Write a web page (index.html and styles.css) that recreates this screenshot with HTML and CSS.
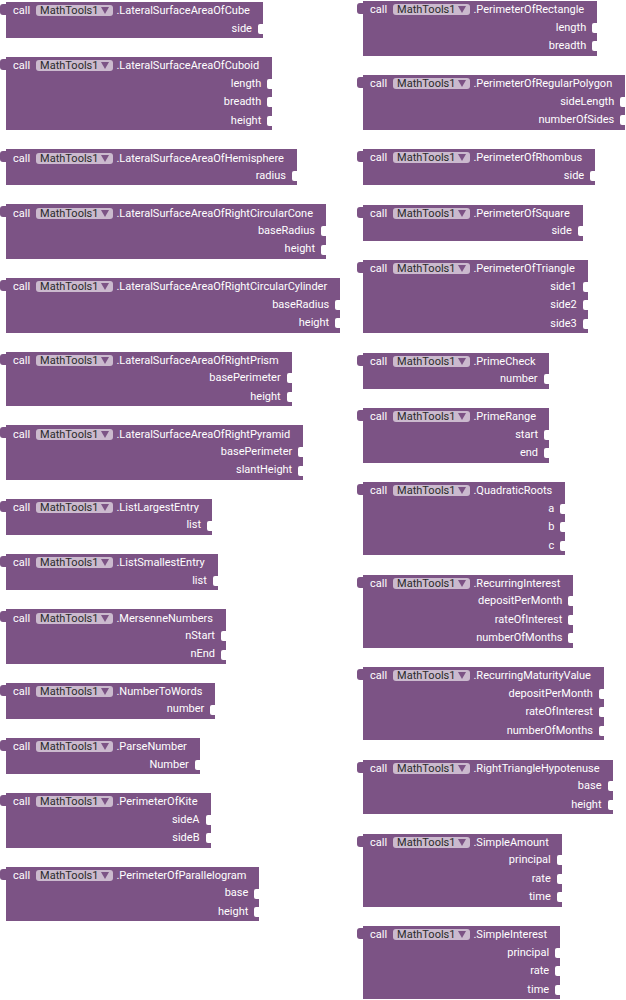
FILE: index.html
```html
<!DOCTYPE html>
<html>
<head>
<meta charset="utf-8">
<link rel="stylesheet" href="styles.css">
</head>
<body>
<div class="ws">
  <div class="col col-left">
    <div class="blk"><div class="hdr"><span>call</span><span class="pill">MathTools1</span><span class="meth">.LateralSurfaceAreaOfCube</span></div><div class="in">side</div></div>
    <div class="blk"><div class="hdr"><span>call</span><span class="pill">MathTools1</span><span class="meth">.LateralSurfaceAreaOfCuboid</span></div><div class="in">length</div><div class="in">breadth</div><div class="in">height</div></div>
    <div class="blk"><div class="hdr"><span>call</span><span class="pill">MathTools1</span><span class="meth">.LateralSurfaceAreaOfHemisphere</span></div><div class="in">radius</div></div>
    <div class="blk"><div class="hdr"><span>call</span><span class="pill">MathTools1</span><span class="meth">.LateralSurfaceAreaOfRightCircularCone</span></div><div class="in">baseRadius</div><div class="in">height</div></div>
    <div class="blk"><div class="hdr"><span>call</span><span class="pill">MathTools1</span><span class="meth">.LateralSurfaceAreaOfRightCircularCylinder</span></div><div class="in">baseRadius</div><div class="in">height</div></div>
    <div class="blk"><div class="hdr"><span>call</span><span class="pill">MathTools1</span><span class="meth">.LateralSurfaceAreaOfRightPrism</span></div><div class="in">basePerimeter</div><div class="in">height</div></div>
    <div class="blk"><div class="hdr"><span>call</span><span class="pill">MathTools1</span><span class="meth">.LateralSurfaceAreaOfRightPyramid</span></div><div class="in">basePerimeter</div><div class="in">slantHeight</div></div>
    <div class="blk"><div class="hdr"><span>call</span><span class="pill">MathTools1</span><span class="meth">.ListLargestEntry</span></div><div class="in">list</div></div>
    <div class="blk"><div class="hdr"><span>call</span><span class="pill">MathTools1</span><span class="meth">.ListSmallestEntry</span></div><div class="in">list</div></div>
    <div class="blk"><div class="hdr"><span>call</span><span class="pill">MathTools1</span><span class="meth">.MersenneNumbers</span></div><div class="in">nStart</div><div class="in">nEnd</div></div>
    <div class="blk"><div class="hdr"><span>call</span><span class="pill">MathTools1</span><span class="meth">.NumberToWords</span></div><div class="in">number</div></div>
    <div class="blk"><div class="hdr"><span>call</span><span class="pill">MathTools1</span><span class="meth">.ParseNumber</span></div><div class="in">Number</div></div>
    <div class="blk"><div class="hdr"><span>call</span><span class="pill">MathTools1</span><span class="meth">.PerimeterOfKite</span></div><div class="in">sideA</div><div class="in">sideB</div></div>
    <div class="blk"><div class="hdr"><span>call</span><span class="pill">MathTools1</span><span class="meth">.PerimeterOfParallelogram</span></div><div class="in">base</div><div class="in">height</div></div>
  </div>
  <div class="col col-right">
    <div class="blk"><div class="hdr"><span>call</span><span class="pill">MathTools1</span><span class="meth">.PerimeterOfRectangle</span></div><div class="in">length</div><div class="in">breadth</div></div>
    <div class="blk"><div class="hdr"><span>call</span><span class="pill">MathTools1</span><span class="meth">.PerimeterOfRegularPolygon</span></div><div class="in">sideLength</div><div class="in">numberOfSides</div></div>
    <div class="blk"><div class="hdr"><span>call</span><span class="pill">MathTools1</span><span class="meth">.PerimeterOfRhombus</span></div><div class="in">side</div></div>
    <div class="blk"><div class="hdr"><span>call</span><span class="pill">MathTools1</span><span class="meth">.PerimeterOfSquare</span></div><div class="in">side</div></div>
    <div class="blk"><div class="hdr"><span>call</span><span class="pill">MathTools1</span><span class="meth">.PerimeterOfTriangle</span></div><div class="in">side1</div><div class="in">side2</div><div class="in">side3</div></div>
    <div class="blk"><div class="hdr"><span>call</span><span class="pill">MathTools1</span><span class="meth">.PrimeCheck</span></div><div class="in">number</div></div>
    <div class="blk"><div class="hdr"><span>call</span><span class="pill">MathTools1</span><span class="meth">.PrimeRange</span></div><div class="in">start</div><div class="in">end</div></div>
    <div class="blk"><div class="hdr"><span>call</span><span class="pill">MathTools1</span><span class="meth">.QuadraticRoots</span></div><div class="in">a</div><div class="in">b</div><div class="in">c</div></div>
    <div class="blk"><div class="hdr"><span>call</span><span class="pill">MathTools1</span><span class="meth">.RecurringInterest</span></div><div class="in">depositPerMonth</div><div class="in">rateOfInterest</div><div class="in">numberOfMonths</div></div>
    <div class="blk"><div class="hdr"><span>call</span><span class="pill">MathTools1</span><span class="meth">.RecurringMaturityValue</span></div><div class="in">depositPerMonth</div><div class="in">rateOfInterest</div><div class="in">numberOfMonths</div></div>
    <div class="blk"><div class="hdr"><span>call</span><span class="pill">MathTools1</span><span class="meth">.RightTriangleHypotenuse</span></div><div class="in">base</div><div class="in">height</div></div>
    <div class="blk"><div class="hdr"><span>call</span><span class="pill">MathTools1</span><span class="meth">.SimpleAmount</span></div><div class="in">principal</div><div class="in">rate</div><div class="in">time</div></div>
    <div class="blk"><div class="hdr"><span>call</span><span class="pill">MathTools1</span><span class="meth">.SimpleInterest</span></div><div class="in">principal</div><div class="in">rate</div><div class="in">time</div></div>
  </div>
</div>
</body>
</html>
```
FILE: styles.css
```css
* { box-sizing: border-box; }
html, body { margin: 0; padding: 0; background: #ffffff; }
body {
  width: 626px;
  height: 1000px;
  overflow: hidden;
  font-family: Roboto, "Noto Sans", sans-serif;
  font-size: 11px;
  color: #ffffff;
}
.ws { display: flex; align-items: flex-start; }
.col { display: flex; flex-direction: column; align-items: flex-start; flex-shrink: 0; }
.col-left { width: 357px; padding: 2px 0 0 6px; gap: 19.15px; }
.col-right { padding: 1px 0 0 6px; gap: 19.5px; }

.blk {
  position: relative;
  background: #7c5385;
  display: flex;
  flex-direction: column;
  align-items: flex-end;
}
.blk::before {
  content: "";
  position: absolute;
  left: -6px;
  top: 2px;
  width: 6px;
  height: 11px;
  background: #7c5385;
  border-radius: 3px 0 0 3px;
}
.hdr {
  align-self: stretch;
  display: flex;
  align-items: center;
  height: 17.5px;
  padding: 0 13px 0 7px;
  white-space: nowrap;
}
.pill {
  display: flex;
  align-items: center;
  height: 11px;
  margin-left: 6px;
  padding: 0 4px 0 4px;
  background: #cbbace;
  color: #2a2a2a;
  border-radius: 3px;
}
.pill::after {
  content: "";
  width: 0;
  height: 0;
  border-left: 4.5px solid transparent;
  border-right: 4.5px solid transparent;
  border-top: 7px solid #7c5385;
  margin-left: 3px;
}
.meth { margin-left: 3px; }
.in {
  position: relative;
  height: 18.5px;
  line-height: 18.5px;
  padding-right: 11px;
  white-space: nowrap;
}
.in::after {
  content: "";
  position: absolute;
  right: 0;
  top: 4.25px;
  width: 5px;
  height: 10px;
  background: #ffffff;
  border-radius: 2px 0 0 2px;
}
```
